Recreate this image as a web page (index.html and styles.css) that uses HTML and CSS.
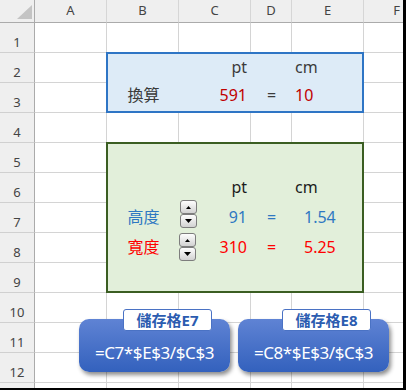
FILE: index.html
```html
<!DOCTYPE html>
<html lang="zh-Hant">
<head>
  <meta charset="UTF-8">
  <meta name="viewport" content="width=device-width, initial-scale=1.0">
  <title>pt 換算 cm</title>
  <link rel="stylesheet" href="styles.css">
</head>
<body>
  <div class="sheet">
    <!-- Column headers -->
    <div class="corner"><span class="corner-mark"></span></div>
    <div class="col-head">A</div>
    <div class="col-head">B</div>
    <div class="col-head">C</div>
    <div class="col-head">D</div>
    <div class="col-head">E</div>
    <div class="col-head">F</div>

    <!-- Row headers (row 13 is clipped by the window, so no label) -->
    <div class="row-head">1</div>
    <div class="row-head">2</div>
    <div class="row-head">3</div>
    <div class="row-head">4</div>
    <div class="row-head">5</div>
    <div class="row-head">6</div>
    <div class="row-head">7</div>
    <div class="row-head">8</div>
    <div class="row-head">9</div>
    <div class="row-head">10</div>
    <div class="row-head">11</div>
    <div class="row-head">12</div>
    <div class="row-head"></div>

    <!-- Empty cells with gridlines -->
    <div class="cells">
      <div class="grid-col"></div>
      <div class="grid-col"></div>
      <div class="grid-col"></div>
      <div class="grid-col"></div>
      <div class="grid-col"></div>
      <div class="grid-col"></div>
    </div>

    <!-- B2:E3 conversion factor -->
    <div class="range range-blue">
      <div class="cell"></div>
      <div class="cell right ink-dark">pt</div>
      <div class="cell"></div>
      <div class="cell left ink-dark">cm</div>

      <div class="cell center ink-dark">換算</div>
      <div class="cell right ink-red">591</div>
      <div class="cell center ink-dark">=</div>
      <div class="cell left ink-red">10</div>
    </div>

    <!-- B5:E9 height / width -->
    <div class="range range-green">
      <div class="cell full-row"></div>

      <div class="cell"></div>
      <div class="cell right ink-black">pt</div>
      <div class="cell"></div>
      <div class="cell left ink-black">cm</div>

      <div class="cell center ink-blue">高度</div>
      <div class="cell right spin-cell ink-blue">
        <div class="spinner">
          <button class="spin-btn"><svg width="5" height="3" viewBox="0 0 5 3"><path d="M0 3L2.5 0L5 3Z"/></svg></button>
          <button class="spin-btn"><svg width="7" height="4" viewBox="0 0 7 4"><path d="M0 0H7L3.5 4Z"/></svg></button>
        </div>
        <span>91</span>
      </div>
      <div class="cell center ink-blue">=</div>
      <div class="cell left indent ink-blue">1.54</div>

      <div class="cell center ink-bright-red">寬度</div>
      <div class="cell right spin-cell ink-bright-red">
        <div class="spinner spinner-low">
          <button class="spin-btn"><svg width="5" height="3" viewBox="0 0 5 3"><path d="M0 3L2.5 0L5 3Z"/></svg></button>
          <button class="spin-btn"><svg width="7" height="4" viewBox="0 0 7 4"><path d="M0 0H7L3.5 4Z"/></svg></button>
        </div>
        <span>310</span>
      </div>
      <div class="cell center ink-bright-red">=</div>
      <div class="cell left indent ink-bright-red">5.25</div>
    </div>

    <!-- Formula callouts -->
    <div class="callout callout-e7">
      <div class="callout-label">儲存格E7</div>
      =C7*$E$3/$C$3
    </div>
    <div class="callout callout-e8">
      <div class="callout-label">儲存格E8</div>
      =C8*$E$3/$C$3
    </div>
  </div>
</body>
</html>
```

FILE: styles.css
```css
* {
  box-sizing: border-box;
}

body {
  margin: 0;
  background-color: #fff;
  font-family: "Noto Sans", "Noto Sans CJK TC", sans-serif;
}

/* Worksheet: headers + cells, clipped by the window */
.sheet {
  position: relative;
  width: 406px;
  height: 390px;
  overflow: hidden;
  border-right: 3px solid #000;
  border-bottom: 2px solid #000;
  display: grid;
  grid-template-columns: 35px 72px 72px 72px 41px 72px 66px;
  grid-template-rows: 23px repeat(13, 30px);
}

.corner,
.col-head,
.row-head {
  display: flex;
  background-color: #efefef;
  color: #444;
  font-size: 13px;
  line-height: 18px;
}

.corner {
  justify-content: flex-end;
  align-items: flex-end;
  padding: 0 2px 3px 0;
  border-right: 1px solid #ababab;
  border-bottom: 1px solid #ababab;
}

.corner-mark {
  width: 15px;
  height: 14px;
  background-color: #c4c4c4;
  clip-path: polygon(100% 0, 100% 100%, 0 100%);
}

.col-head {
  justify-content: center;
  align-items: center;
  padding-bottom: 3px;
  border-right: 1px solid #d6d6d6;
  border-bottom: 1px solid #ababab;
}

.row-head {
  grid-column: 1;
  justify-content: center;
  align-items: flex-end;
  padding-bottom: 1px;
  border-right: 1px solid #ababab;
  border-bottom: 1px solid #d0d0d0;
}

.cells {
  grid-column: 2 / -1;
  grid-row: 2 / -1;
  display: grid;
  grid-template-columns: 72px 72px 72px 41px 72px 66px;
  background: repeating-linear-gradient(to bottom, transparent 0 29px, #d4d4d4 29px 30px);
}

.grid-col {
  border-right: 1px solid #d4d4d4;
}

/* Filled cell ranges */
.range {
  grid-column: 3 / 7;
  margin: -1px 0 0 -1px;
  display: grid;
  grid-template-columns: 71px 72px 41px 1fr;
  font-size: 16px;
  line-height: 20px;
}

.range-blue {
  grid-row: 3 / 5;
  grid-template-rows: 29px 1fr;
  background-color: #ddebf7;
  border: 2px solid #2e75c5;
}

.range-green {
  grid-row: 6 / 11;
  grid-template-rows: 29px 30px 30px 30px 1fr;
  background-color: #e2efda;
  border: 2px solid #3b5e22;
}

.cell {
  display: flex;
  align-items: flex-end;
  padding-bottom: 6px;
  white-space: nowrap;
}

.full-row {
  grid-column: 1 / -1;
}

.center {
  justify-content: center;
}

.right {
  justify-content: flex-end;
  padding-right: 4px;
}

.left {
  padding-left: 3px;
}

.indent {
  padding-left: 12px;
}

.ink-dark { color: #3b3b3b; }
.ink-black { color: #1c1c1c; }
.ink-red { color: #c00000; }
.ink-blue { color: #2e78c2; }
.ink-bright-red { color: #ff0000; }

/* Spin button form controls */
.spin-cell {
  justify-content: space-between;
  padding-left: 1px;
}

.spinner {
  align-self: flex-start;
  margin-top: -3px;
  width: 17px;
  display: flex;
  flex-direction: column;
}

.spinner-low {
  margin-top: 0;
  margin-left: -1px;
}

.spin-btn {
  height: 14px;
  margin: 0;
  padding: 0;
  display: flex;
  align-items: center;
  justify-content: center;
  border: 1px solid #7d7d7d;
  border-radius: 3px;
  background: linear-gradient(#fefefe, #d2d2d2);
}

.spin-btn svg {
  fill: #000;
}

/* Callout shapes */
.callout {
  position: absolute;
  top: 319px;
  width: 151px;
  height: 53px;
  padding-top: 14px;
  display: flex;
  justify-content: center;
  align-items: center;
  border-radius: 10px;
  background: linear-gradient(#5f83d4, #3361bd);
  box-shadow: 2px 3px 4px rgba(0, 0, 0, 0.45);
  color: #fff;
  font-size: 17px;
  letter-spacing: -0.4px;
  white-space: nowrap;
}

.callout-e7 {
  left: 79px;
}

.callout-e8 {
  left: 238px;
}

.callout-label {
  position: absolute;
  top: -10px;
  left: 44px;
  width: 89px;
  height: 22px;
  display: flex;
  justify-content: center;
  align-items: center;
  background-color: #fff;
  border: 1px solid #4a72c4;
  border-radius: 3px;
  color: #2b5cb0;
  font-size: 15px;
  font-weight: bold;
  letter-spacing: 0;
  line-height: 1;
}
```
